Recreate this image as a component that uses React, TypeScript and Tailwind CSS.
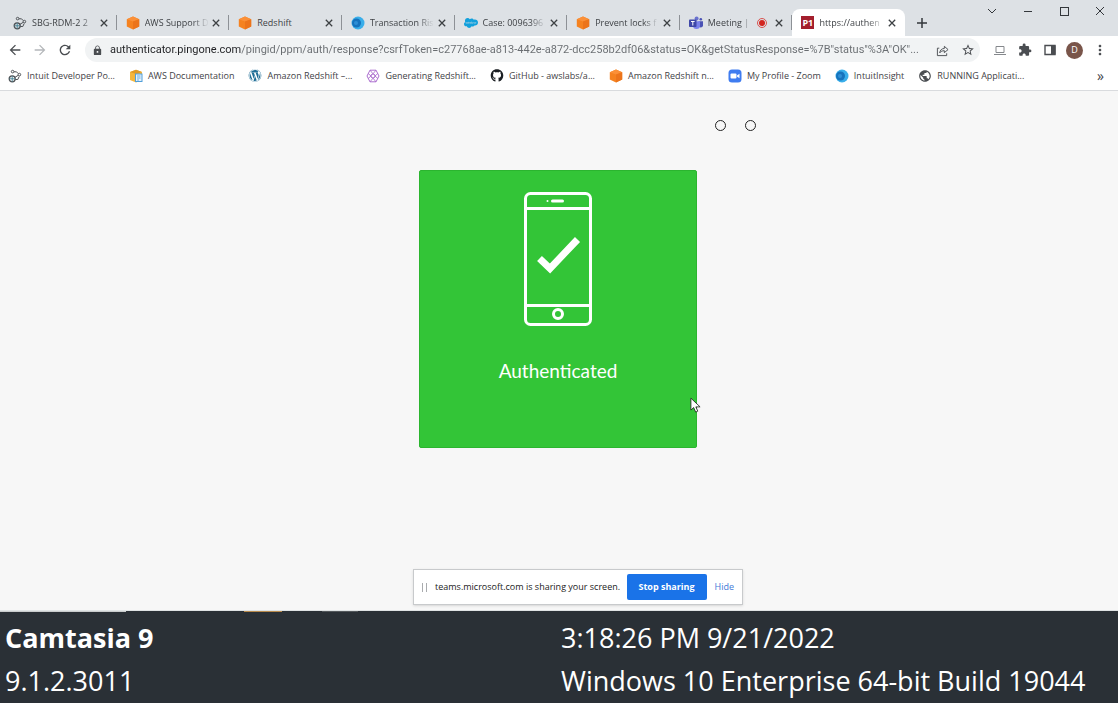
import type { ReactNode } from "react";
import { FaGithub, FaSalesforce, FaWordpress } from "react-icons/fa";
import {
  MdArrowBack,
  MdArrowForward,
  MdExtension,
  MdLock,
  MdMoreVert,
  MdPublic,
  MdRefresh,
  MdStarBorder,
} from "react-icons/md";

function NodesIcon() {
  return (
    <svg viewBox="0 0 14 14" className="h-[14px] w-[14px]" fill="none" stroke="#4e5256">
      <circle cx="4.2" cy="9.8" r="3" strokeWidth="1.3" />
      <path d="M1.5 9.8h5.5M4.2 7v5.6" stroke="#3f7f92" strokeWidth=".9" />
      <circle cx="4.6" cy="2.6" r="1.3" />
      <circle cx="11.4" cy="5.6" r="1.3" />
      <path d="M6 2.8h2.500l1.700 1.800M7 8.300l3.200-2M7.300 10.500h2.500l1.400-3" />
    </svg>
  );
}

function CubeIcon() {
  return (
    <svg viewBox="0 0 14 14" className="h-[14px] w-[14px]">
      <path d="M7 .6l6.200 2.600v7.400L7 13.400.8 10.600V3.200z" fill="#f58220" />
      <path d="M7 .6l6.200 2.600L7 5.400.8 3.200z" fill="#fb9038" />
      <path d="M7 5.400l6.200-2.200v7.400L7 13.400z" fill="#ec741b" />
    </svg>
  );
}

function DocsCubeIcon() {
  return (
    <svg viewBox="0 0 14 14" className="h-[14px] w-[14px]">
      <path d="M1 3l6-2.300L13 3v8l-6 2.400L1 11z" fill="#f4b63c" />
      <path d="M1 3l6-2.300L13 3 7 5z" fill="#e09a24" />
      <path d="M6 4.500h7.500V13H6z" fill="#4f9ed9" />
      <path d="M7 5.500h5.500V12H7z" fill="#e4f1fa" />
      <path d="M8 7h3.500M8 9h3.500M8 11h2" stroke="#4f9ed9" strokeWidth=".8" />
    </svg>
  );
}

function BlueDotIcon() {
  return (
    <svg viewBox="0 0 14 14" className="h-[14px] w-[14px]">
      <circle cx="7" cy="7" r="6.5" fill="#39aeea" />
      <circle cx="5.5" cy="7" r="4.5" fill="#1673bd" />
      <circle cx="5" cy="7" r="2" fill="#2d8fd6" />
    </svg>
  );
}

function HexIcon() {
  return (
    <svg viewBox="0 0 14 14" className="h-[14px] w-[14px]" fill="none" stroke="#a35fc9">
      <path d="M4 1.200h6l3 5.800-3 5.800H4L1 7z" strokeWidth=".9" />
      <circle cx="7" cy="7" r="2" />
      <path d="M4 1.200l3 3.600 3-3.600M2.200 4.500L5 7 2.200 9.500M11.800 4.500L9 7l2.800 2.500M4 12.800l3-3.600 3 3.600" strokeWidth=".8" />
    </svg>
  );
}

function TeamsIcon() {
  return (
    <svg viewBox="0 0 14 14" className="h-[14px] w-[14px]">
      <circle cx="7.6" cy="2.5" r="2" fill="#6a72cf" />
      <circle cx="11.8" cy="3.2" r="1.3" fill="#4a52b5" />
      <path d="M9.500 5.200H14v4.500a2.300 2.300 0 0 1-4.500 0z" fill="#4a52b5" />
      <path d="M4 5.200h7v4.300a3.500 3.500 0 0 1-7 0z" fill="#7b83eb" />
      <rect y="3.5" width="7.5" height="7.5" rx=".8" fill="#3f48a8" />
      <path d="M2 5.500h3.600M3.800 5.500v4" stroke="#fff" />
    </svg>
  );
}

function PingIcon() {
  return (
    <span className="flex h-[13px] w-[13px] items-center justify-center bg-[#a31f2d] text-[9px] font-bold text-white">
      P1
    </span>
  );
}

function ZoomIcon() {
  return (
    <svg viewBox="0 0 14 14" className="h-[14px] w-[14px]">
      <rect x=".5" y=".5" width="13" height="13" rx="3.5" fill="#3f7cf0" />
      <rect x="2.5" y="4.5" width="6" height="5" rx="1" fill="#fff" />
      <path d="M9 6.500l2.500-1.700v4.400L9 7.500z" fill="#fff" />
    </svg>
  );
}

function CloseIcon({ className }: { className: string }) {
  return (
    <svg viewBox="0 0 10 10" className={className} fill="none" stroke="currentColor">
      <path d="M1 1l8 8M9 1L1 9" />
    </svg>
  );
}

type TabItem = { title: string; icon: ReactNode; recording?: boolean; active?: boolean };

const tabs: TabItem[] = [
  { title: "SBG-RDM-2 2", icon: <NodesIcon /> },
  { title: "AWS Support D", icon: <CubeIcon /> },
  { title: "Redshift", icon: <CubeIcon /> },
  { title: "Transaction Ris", icon: <BlueDotIcon /> },
  { title: "Case: 0096396", icon: <FaSalesforce className="h-[14px] w-[14px] text-[#12a0dc]" /> },
  { title: "Prevent locks f", icon: <CubeIcon /> },
  { title: "Meeting |", icon: <TeamsIcon />, recording: true },
  { title: "https://authen", icon: <PingIcon />, active: true },
];

const bookmarks = [
  { title: "Intuit Developer Po...", icon: <NodesIcon /> },
  { title: "AWS Documentation", icon: <DocsCubeIcon /> },
  { title: "Amazon Redshift –...", icon: <FaWordpress className="h-[13px] w-[14px] text-[#1f6d96]" /> },
  { title: "Generating Redshift...", icon: <HexIcon /> },
  { title: "GitHub - awslabs/a...", icon: <FaGithub className="h-[13px] w-[14px] text-[#1b1f23]" /> },
  { title: "Amazon Redshift n...", icon: <CubeIcon /> },
  { title: "My Profile - Zoom", icon: <ZoomIcon /> },
  { title: "IntuitInsight", icon: <BlueDotIcon /> },
  { title: "RUNNING Applicati...", icon: <MdPublic className="h-[14px] w-[14px] text-[#4a4d51]" /> },
];

function Tab({ title, icon, recording, active }: TabItem) {
  return (
    <div
      className={
        active
          ? "flex min-w-0 items-center rounded-t-lg bg-white pl-[9px] pr-[9px]"
          : "flex min-w-0 items-center pl-[9px]"
      }
    >
      <button className="flex min-w-0 flex-1 items-center gap-[5px] text-left">
        <span className="shrink-0">{icon}</span>
        <span
          className={
            title === "Redshift"
              ? "flex-1 whitespace-nowrap"
              : "flex-1 whitespace-nowrap [mask-image:linear-gradient(to_right,black_75%,transparent)]"
          }
        >
          {title}
        </span>
        {recording && (
          <span className="mr-1 flex h-[10px] w-[10px] shrink-0 items-center justify-center rounded-full border border-[#d9534f]">
            <span className="h-[6px] w-[6px] rounded-full bg-[#d3261f]" />
          </span>
        )}
      </button>
      <button aria-label="Close tab" className="flex w-3 shrink-0 justify-end text-[#3c4043]">
        <CloseIcon className="h-2 w-2 stroke-[1.6]" />
      </button>
      {!active && <span className="ml-2 h-[15px] w-px shrink-0 bg-[#8d9196]" />}
    </div>
  );
}

function ToolButton({ label, children }: { label: string; children: ReactNode }) {
  return (
    <button aria-label={label} className="flex h-6 w-[25px] shrink-0 items-center justify-center text-[#4a4d51]">
      {children}
    </button>
  );
}

function WindowControls() {
  return (
    <div className="ml-auto flex h-[22px] text-[#33373b]">
      <button aria-label="Search tabs" className="flex w-9 items-center justify-center">
        <svg viewBox="0 0 10 10" className="h-[10px] w-[10px]" fill="none" stroke="currentColor">
          <path d="M1 3l4 4 4-4" />
        </svg>
      </button>
      <button aria-label="Minimize" className="flex w-9 items-center justify-center">
        <span className="h-px w-2 bg-[#33373b]" />
      </button>
      <button aria-label="Maximize" className="flex w-9 items-center justify-center">
        <span className="h-[9px] w-[9px] border border-[#33373b]" />
      </button>
      <button aria-label="Close" className="flex w-9 items-center justify-center">
        <CloseIcon className="h-[10px] w-[10px]" />
      </button>
    </div>
  );
}

function Browser() {
  return (
    <header className="border-b border-[#d9dbde] bg-white text-[9px] text-[#3f4246]">
      <div className="flex h-9 bg-[#dde1e5]">
        <div className="grid min-w-0 flex-1 grid-cols-8 pl-1 pt-[9px]">
          {tabs.map((tab) => (
            <Tab key={tab.title} {...tab} />
          ))}
        </div>
        <div className="flex w-[213px] shrink-0">
          <button aria-label="New tab" className="mt-[9px] flex h-[27px] w-[34px] items-center justify-center text-[#33373b]">
            <svg viewBox="0 0 10 10" className="h-[10px] w-[10px]" stroke="currentColor" strokeWidth="1.5">
              <path d="M5 0v10M0 5h10" />
            </svg>
          </button>
          <WindowControls />
        </div>
      </div>

      <div className="flex h-7 items-center pl-[2px] pr-[6px]">
        <ToolButton label="Back"><MdArrowBack className="h-4 w-4" /></ToolButton>
        <ToolButton label="Forward"><MdArrowForward className="h-4 w-4 text-[#b4b7ba]" /></ToolButton>
        <ToolButton label="Reload"><MdRefresh className="h-4 w-4" /></ToolButton>
        <div className="ml-2 flex h-6 min-w-0 flex-1 items-center rounded-full bg-[#f1f3f4] pl-[7px]">
          <MdLock className="h-[11px] w-[11px] shrink-0 text-[#4a4d51]" />
          <input
            aria-label="Address"
            readOnly
            className="ml-[7px] min-w-0 flex-1 bg-[linear-gradient(to_right,#202124_131px,#686c70_131px)] bg-clip-text pt-px font-[Roboto,sans-serif] text-[11px] text-transparent outline-none"
            value={'authenticator.pingone.com/pingid/ppm/auth/response?csrfToken=c27768ae-a813-442e-a872-dcc258b2df06&status=OK&getStatusResponse=%7B"status"%3A"OK"...'}
          />
          <ToolButton label="Share">
            <svg viewBox="0 0 14 14" className="h-[13px] w-[13px]" fill="none" stroke="currentColor">
              <path d="M3.500 4.500H1.500v8h10V10" />
              <path d="M4 9.500c.5-3 2-4.500 5-4.700V2.500L13 6 9 9.300V7.200C6.800 7.200 5.200 8 4 9.500z" strokeLinejoin="round" />
            </svg>
          </ToolButton>
          <ToolButton label="Bookmark this page"><MdStarBorder className="h-[14px] w-[14px]" /></ToolButton>
        </div>
        <div className="ml-[7px] flex">
          <ToolButton label="Device">
            <svg viewBox="0 0 12 10" className="h-[10px] w-3" fill="none" stroke="#85888c">
              <path d="M2 1.500h8v6H2zM0 9.500h12" />
            </svg>
          </ToolButton>
          <ToolButton label="Extensions"><MdExtension className="h-[14px] w-[14px]" /></ToolButton>
          <ToolButton label="Side panel">
            <svg viewBox="0 0 12 12" className="h-3 w-3" fill="none" stroke="currentColor">
              <path d="M1 1.500h10v9H1z" strokeWidth="1.4" />
              <path d="M7.500 1.500H11v9H7.500z" fill="currentColor" />
            </svg>
          </ToolButton>
          <ToolButton label="Profile">
            <span className="flex h-[17px] w-[17px] items-center justify-center rounded-full bg-[#79554a] text-[9px] text-white">D</span>
          </ToolButton>
          <ToolButton label="Menu"><MdMoreVert className="h-4 w-4" /></ToolButton>
        </div>
      </div>

      <nav className="flex h-[26px] items-center gap-[14px] pb-[3px] pl-2 pr-[14px]">
        {bookmarks.map((bookmark) => (
          <a key={bookmark.title} href="#" className="flex shrink-0 items-center gap-[5px] whitespace-nowrap">
            {bookmark.icon}
            {bookmark.title}
          </a>
        ))}
        <button aria-label="More bookmarks" className="ml-auto text-[14px] leading-4">»</button>
      </nav>
    </header>
  );
}

function PhoneIcon() {
  return (
    <svg viewBox="0 0 68 134" className="h-[134px] w-[68px]" fill="none" stroke="#fff" strokeWidth="3">
      <rect x="1.5" y="1.5" width="65" height="131" rx="5" />
      <path d="M1 16.500h66M1 113.500h66" />
      <path d="M28.500 9h10" strokeLinecap="round" />
      <circle cx="23.5" cy="9" r="1" fill="#fff" stroke="none" />
      <circle cx="34" cy="122" r="4.5" />
      <path d="M15.500 66.500L26 76.500 53.500 47.500" strokeWidth="7" />
    </svg>
  );
}

function AuthCard() {
  return (
    <section className="relative mx-auto flex h-[278px] w-[278px] flex-col items-center rounded-[2px] border border-[#2bb52f] bg-[#33c537] pt-[21px]">
      <PhoneIcon />
      <h1 className="mt-[31px] font-[Lato] text-[19px] leading-7 text-white">Authenticated</h1>
      <svg viewBox="0 0 12 18" className="absolute left-[270px] top-[226px] h-[17px] w-[11px]">
        <path d="M1 1v13l3-2.800 2.200 5L8.500 15.200 6.400 10.500H11z" fill="#fff" stroke="#222" strokeWidth=".9" />
      </svg>
    </section>
  );
}

function SharingBar() {
  return (
    <div className="mx-auto flex h-9 w-[330px] items-center border border-[#c8cacc] bg-white pl-2 text-[9px] text-[#222] shadow">
      <span className="h-[9px] w-[5px] shrink-0 border-x border-[#a9abae]" />
      <span className="ml-2 whitespace-nowrap">teams.microsoft.com is sharing your screen.</span>
      <button className="ml-auto h-[26px] w-20 shrink-0 rounded-[2px] bg-[#1a73e8] font-bold text-white">
        Stop sharing
      </button>
      <button className="mx-2 text-[#4379d8]">Hide</button>
    </div>
  );
}

export default function App() {
  return (
    <div className="flex min-h-screen flex-col bg-[#f7f7f7] font-['Open_Sans',sans-serif]">
      <Browser />
      <main className="flex flex-1 flex-col border-b border-[#dfe3e4] pb-[5px] pr-[2px]">
        <div className="flex h-[79px] justify-center gap-[19px] pl-[354px] pt-[29px]">
          <span className="h-[11px] w-[11px] rounded-full border border-[#222]" />
          <span className="h-[11px] w-[11px] rounded-full border border-[#222]" />
        </div>
        <AuthCard />
        <div className="mt-auto pl-10">
          <SharingBar />
        </div>
      </main>
      <div className="flex h-px bg-[#2a3036]">
        <span className="w-[126px] bg-[#c9cccd]" />
        <span className="ml-[118px] w-[38px] bg-[#b88a4c]" />
        <span className="ml-10 w-9 bg-[#53585c]" />
      </div>
      <footer className="grid grid-cols-2 gap-x-1 bg-[#2a3036] px-[5px] pb-[1px] pt-1 text-[27px] leading-[43px] text-white">
        <strong>Camtasia 9</strong>
        <span>3:18:26 PM 9/21/2022</span>
        <span>9.1.2.3011</span>
        <span className="whitespace-nowrap">Windows 10 Enterprise 64-bit Build 19044</span>
      </footer>
    </div>
  );
}
